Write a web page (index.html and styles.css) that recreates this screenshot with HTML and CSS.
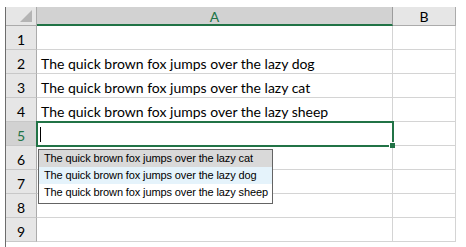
FILE: index.html
```html
<!DOCTYPE html>
<html>
<head>
<meta charset="utf-8">
<link rel="stylesheet" href="styles.css">
</head>
<body>
<div class="sheet">
  <div class="grid">
    <div class="corner"><span class="tri"></span></div>
    <div class="colhead sel">A</div>
    <div class="colhead">B</div>

    <div class="rowhead">1</div><div class="cell"></div><div class="cell"></div>
    <div class="rowhead">2</div><div class="cell">The quick brown fox jumps over the lazy dog</div><div class="cell"></div>
    <div class="rowhead">3</div><div class="cell">The quick brown fox jumps over the lazy cat</div><div class="cell"></div>
    <div class="rowhead">4</div><div class="cell">The quick brown fox jumps over the lazy sheep</div><div class="cell"></div>
    <div class="rowhead sel">5</div><div class="cell active"><span class="caret"></span><span class="handle"></span></div><div class="cell"></div>
    <div class="rowhead">6</div><div class="cell"></div><div class="cell"></div>
    <div class="rowhead">7</div><div class="cell"></div><div class="cell"></div>
    <div class="rowhead">8</div><div class="cell"></div><div class="cell"></div>
    <div class="rowhead">9</div><div class="cell"></div><div class="cell"></div>
  </div>
  <ul class="dropdown">
    <li class="hover">The quick brown fox jumps over the lazy cat</li>
    <li class="picked">The quick brown fox jumps over the lazy dog</li>
    <li>The quick brown fox jumps over the lazy sheep</li>
  </ul>
</div>
</body>
</html>
```
FILE: styles.css
```css
html, body {
  margin: 0;
  padding: 0;
  background: #ffffff;
}
.sheet {
  position: relative;
  margin: 7px 0 0 5px;
  width: 451px;
  height: 240px;
  overflow: hidden;
  border-left: 1px solid #6d6d6d;
}
.grid {
  display: grid;
  grid-template-columns: 31px 356px 63px;
  grid-template-rows: 19px repeat(9, 24px);
  font-family: "Lato", "Open Sans", sans-serif;
}
.corner {
  position: relative;
  background: #e6e6e6;
  border-right: 1px solid #ababab;
  border-bottom: 1px solid #ababab;
}
.tri {
  position: absolute;
  right: 4px;
  bottom: 3px;
  width: 0;
  height: 0;
  border-left: 12px solid transparent;
  border-bottom: 12px solid #b4b4b4;
}
.colhead {
  background: #e6e6e6;
  border-right: 1px solid #ababab;
  border-bottom: 1px solid #ababab;
  display: flex;
  align-items: center;
  justify-content: center;
  font-size: 14px;
  color: #000;
  padding-top: 1px;
}
.colhead.sel {
  background: #d2d2d2;
  color: #217346;
  border-bottom: 2px solid #217346;
  border-right-color: #9c9c9c;
}
.rowhead {
  background: #e6e6e6;
  border-right: 1px solid #ababab;
  border-bottom: 1px solid #c8c8c8;
  display: flex;
  align-items: flex-end;
  justify-content: center;
  padding-bottom: 1px;
  font-size: 14px;
  color: #000;
  box-sizing: border-box;
}
.rowhead.sel {
  background: #d2d2d2;
  color: #217346;
}
.cell {
  position: relative;
  border-right: 1px solid #d4d4d4;
  border-bottom: 1px solid #d4d4d4;
  display: flex;
  align-items: flex-end;
  padding: 0 0 1px 4px;
  font-size: 14px;
  color: #000;
  white-space: nowrap;
  box-sizing: border-box;
}
.cell.active {
  outline: 2px solid #217346;
  outline-offset: -1px;
  z-index: 2;
}
.caret {
  position: absolute;
  left: 3px;
  top: 5px;
  width: 1px;
  height: 15px;
  background: #000;
}
.handle {
  position: absolute;
  right: -3px;
  bottom: -3px;
  width: 5px;
  height: 5px;
  background: #217346;
  border: 1px solid #fff;
  border-right: 0;
  border-bottom: 0;
}
.dropdown {
  position: absolute;
  left: 32px;
  top: 142px;
  width: 233px;
  margin: 0;
  padding: 0;
  list-style: none;
  background: #fff;
  border: 1px solid #646464;
  z-index: 5;
  font-family: "Liberation Sans", Arial, sans-serif;
  font-size: 11px;
  letter-spacing: -0.12px;
  color: #000;
}
.dropdown li {
  height: 17px;
  line-height: 17px;
  padding-left: 5px;
  white-space: nowrap;
}
.dropdown li.hover { background: #d9d9d9; }
.dropdown li.picked { background: #e5f3fb; }
.dropdown li:last-child { height: 19px; }
```
